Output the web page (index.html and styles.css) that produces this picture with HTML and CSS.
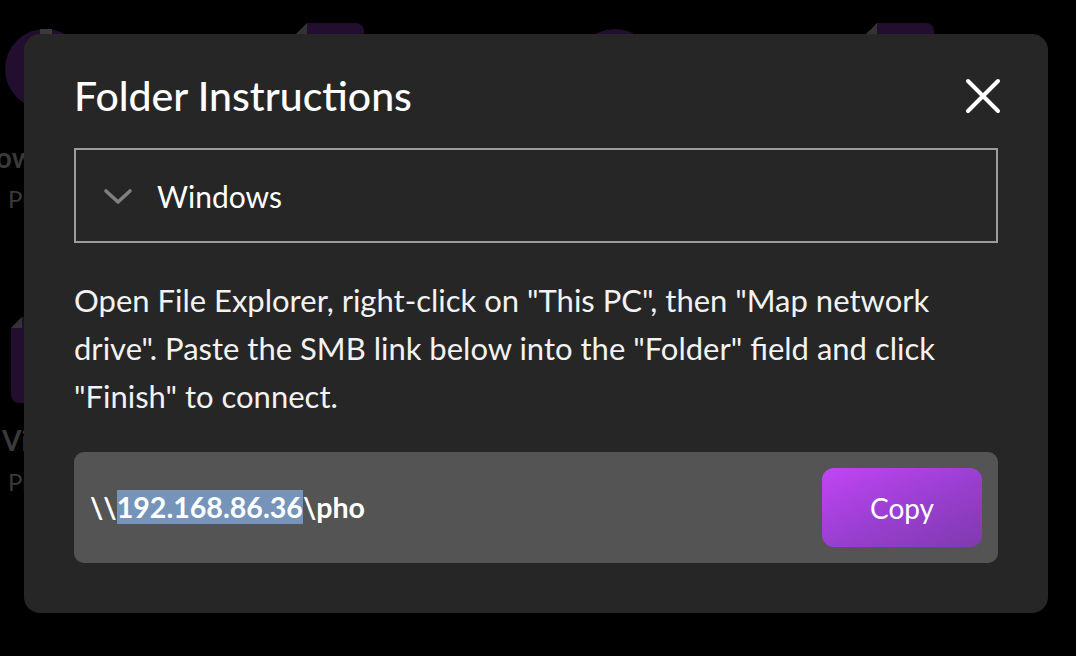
FILE: index.html
```html
<!DOCTYPE html>
<html lang="en">
<head>
<meta charset="utf-8">
<title>Folder Instructions</title>
<link rel="stylesheet" href="styles.css">
</head>
<body>
<main class="page">
  <div class="tiles">
    <div class="tile">
      <div class="icon-wrap"><div class="avatar"></div></div>
      <div class="tile-name">Downloads</div>
      <div class="tile-sub">Private</div>
    </div>
    <div class="tile">
      <div class="icon-wrap"><div class="file"></div></div>
      <div class="tile-name">Documents</div>
      <div class="tile-sub">Private</div>
    </div>
    <div class="tile">
      <div class="icon-wrap"><div class="avatar plain"></div></div>
      <div class="tile-name">Music</div>
      <div class="tile-sub">Private</div>
    </div>
    <div class="tile">
      <div class="icon-wrap"><div class="file"></div></div>
      <div class="tile-name">Backups</div>
      <div class="tile-sub">Private</div>
    </div>
    <div class="tile">
      <div class="icon-wrap"><div class="file"></div></div>
      <div class="tile-name row2">Videos</div>
      <div class="tile-sub">Private</div>
    </div>
  </div>
</main>

<div class="modal" role="dialog" aria-labelledby="modal-title">
  <header class="modal-head">
    <h1 id="modal-title" class="modal-title">Folder Instructions</h1>
    <button class="close" aria-label="Close">
      <svg width="36" height="36" viewBox="0 0 36 36"><path d="M3 3 L33 33 M33 3 L3 33" stroke="#fff" stroke-width="4" stroke-linecap="round" fill="none"/></svg>
    </button>
  </header>

  <div class="select">
    <svg class="chev" width="30" height="18" viewBox="0 0 30 18"><path d="M3 3 L15 14 L27 3" stroke="#808080" stroke-width="3.6" stroke-linecap="round" stroke-linejoin="round" fill="none"/></svg>
    <span class="select-label">Windows</span>
  </div>

  <p class="instructions">Open File Explorer, right-click on "This PC", then "Map network drive". Paste the SMB link below into the "Folder" field and click "Finish" to connect.</p>

  <div class="link-box">
    <span class="link-text">\\<span class="sel">192.168.86.36</span>\pho</span>
    <button class="copy">Copy</button>
  </div>
</div>
</body>
</html>
```

FILE: styles.css
```css
* { box-sizing: border-box; }

html, body {
  margin: 0;
  padding: 0;
  background: #000;
  width: 1076px;
  height: 656px;
  overflow: hidden;
  font-family: Lato, "Open Sans", sans-serif;
}

.page {
  padding-top: 23px;
}

.tiles {
  display: grid;
  grid-template-columns: repeat(4, 90px);
  column-gap: 195px;
  row-gap: 104px;
}

.tile {
  display: flex;
  flex-direction: column;
  align-items: center;
  width: 90px;
}

.icon-wrap {
  height: 86px;
  width: 90px;
  display: flex;
  align-items: flex-end;
  justify-content: center;
}

.avatar {
  width: 80px;
  height: 80px;
  border-radius: 50%;
  background: #220e2e;
  position: relative;
}
.avatar::after {
  content: "";
  position: absolute;
  top: 0;
  left: 35px;
  width: 12px;
  height: 8px;
  background: #3a3a3a;
}
.avatar.plain::after { display: none; }

.file {
  width: 68px;
  height: 86px;
  background: #220e2e;
  border-radius: 0 8px 8px 8px;
  clip-path: polygon(11px 0, 100% 0, 100% 100%, 0 100%, 0 11px);
  position: relative;
}
.file::before {
  content: "";
  position: absolute;
  top: 0;
  left: 0;
  width: 11px;
  height: 11px;
  background: linear-gradient(135deg, transparent 50%, #333 50%);
}

.tile-name {
  margin-top: 31px;
  white-space: nowrap;
  font-weight: 700;
  font-size: 28px;
  color: #3a3a3a;
}
.tile-name.row2 { margin-top: 20px; }

.tile-sub {
  margin-top: 10px;
  white-space: nowrap;
  font-size: 24px;
  color: #3a3a3a;
}

/* Modal */
.modal {
  position: fixed;
  left: 24px;
  top: 34px;
  width: 1024px;
  height: 579px;
  background: #262626;
  border-radius: 16px;
  padding: 38px 50px 50px;
  display: flex;
  flex-direction: column;
}

.modal-head {
  display: flex;
  align-items: center;
  justify-content: space-between;
  height: 48px;
}

.modal-title {
  margin: 0;
  font-size: 41px;
  font-weight: 500;
  color: #fff;
  line-height: 48px;
}

.close {
  background: none;
  border: 0;
  padding: 0;
  margin-right: -3px;
  width: 36px;
  height: 36px;
  display: flex;
}

.select {
  margin-top: 28px;
  height: 95px;
  border: 2px solid #9c9c9c;
  display: flex;
  align-items: center;
  padding-left: 27px;
  gap: 24px;
}

.chev { flex: none; margin-top: 2px; }

.select-label {
  font-size: 30px;
  color: #fff;
}

.instructions {
  margin: 33px 0 0;
  font-size: 31px;
  line-height: 48px;
  color: #f2f2f2;
}

.link-box {
  margin-top: 32px;
  height: 111px;
  background: #545454;
  border-radius: 10px;
  display: flex;
  align-items: center;
  justify-content: space-between;
  padding: 0 16px;
}

.link-text {
  font-size: 28.6px;
  font-weight: 700;
  color: #fff;
  line-height: 47px;
}

.sel {
  background: #7694b9;
}

.copy {
  width: 160px;
  height: 79px;
  border: 0;
  border-radius: 12px;
  background: linear-gradient(155deg, #c245f5 0%, #9b3fd2 50%, #7f3aae 100%);
  color: #fff;
  font-family: inherit;
  font-size: 28px;
}
```
